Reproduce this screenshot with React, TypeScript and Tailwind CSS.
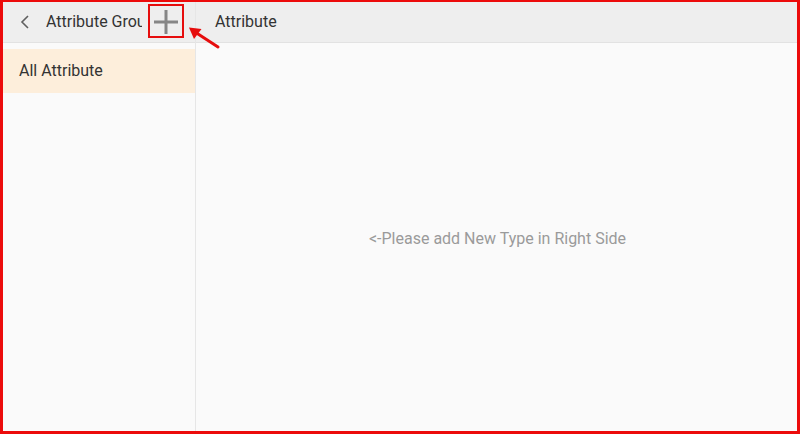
import React from "react";

export default function App() {
  return (
    <div
      className="relative w-[800px] h-[434px] overflow-hidden border-solid border-[#ec0b0b] border-l-[3px] border-t-[2px] border-r-[3px] border-b-[3px] bg-[#fafafa]"
      style={{ fontFamily: "Roboto, 'Noto Sans', sans-serif" }}
    >
      <div className="flex h-full w-full">
        {/* Left column */}
        <div className="w-[193px] shrink-0 border-r border-[#e6e6e6] flex flex-col">
          <div className="h-[41px] bg-[#eeeeee] border-b border-[#e2e2e2] flex items-center">
            <div className="w-[43px] flex items-center justify-center pl-[1px]">
              <svg width="12" height="16" viewBox="0 0 12 16">
                <path d="M9 2 L3 8 L9 14" fill="none" stroke="#5f5f5f" strokeWidth="1.6" />
              </svg>
            </div>
            <div className="w-[96px] overflow-hidden whitespace-nowrap text-[16px] text-[#333333]">
              Attribute Group
            </div>
            <div className="flex-1 flex items-center justify-center pr-[6px]">
              <svg width="26" height="26" viewBox="0 0 26 26" className="mt-[-1px]">
                <path d="M13 1 V25 M1 13 H25" stroke="#868686" strokeWidth="3" />
              </svg>
            </div>
          </div>
          <div className="pt-[6px]">
            <div className="h-[44px] bg-[#fdeedb] flex items-center pl-[16px] text-[16px] text-[#333333]">
              All Attribute
            </div>
          </div>
        </div>
        {/* Right column */}
        <div className="flex-1 flex flex-col">
          <div className="h-[41px] bg-[#eeeeee] border-b border-[#e2e2e2] flex items-center pl-[19px] text-[16px] text-[#333333]">
            Attribute
          </div>
          <div className="flex-1 flex items-center justify-center pt-[4px] pl-[2px] text-[16px] text-[#9a9a9a]">
            &lt;-Please add New Type in Right Side
          </div>
        </div>
      </div>

      {/* annotation: red box around plus */}
      <div className="absolute left-[145px] top-[2px] w-[36px] h-[34px] border-2 border-[#e60d0d]" />
      {/* annotation arrow */}
      <svg className="absolute left-[181px] top-[20px]" width="40" height="30" viewBox="0 0 40 30">
        <path d="M34 25 L11 10" stroke="#e60d0d" strokeWidth="3" strokeLinecap="round" />
        <path d="M5 5.5 L17.5 7 L10 17 Z" fill="#e60d0d" />
      </svg>
    </div>
  );
}
